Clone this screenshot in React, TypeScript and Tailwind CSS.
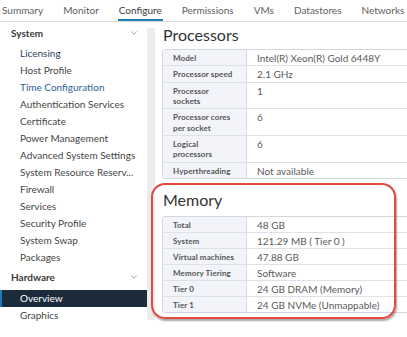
import { ChevronDown } from "lucide-react"

const tabs = ["Summary", "Monitor", "Configure", "Permissions", "VMs", "Datastores", "Networks"]

const systemItems = [
  "Licensing",
  "Host Profile",
  "Time Configuration",
  "Authentication Services",
  "Certificate",
  "Power Management",
  "Advanced System Settings",
  "System Resource Reserv...",
  "Firewall",
  "Services",
  "Security Profile",
  "System Swap",
  "Packages",
]

const processorRows: [string, string][] = [
  ["Model", "Intel(R) Xeon(R) Gold 6448Y"],
  ["Processor speed", "2.1 GHz"],
  ["Processor sockets", "1"],
  ["Processor cores per socket", "6"],
  ["Logical processors", "6"],
  ["Hyperthreading", "Not available"],
]

const memoryRows: [string, string][] = [
  ["Total", "48 GB"],
  ["System", "121.29 MB ( Tier 0 )"],
  ["Virtual machines", "47.88 GB"],
  ["Memory Tiering", "Software"],
  ["Tier 0", "24 GB DRAM (Memory)"],
  ["Tier 1", "24 GB NVMe (Unmappable)"],
]

const PropTable = ({ rows, loose }: { rows: [string, string][]; loose?: boolean }) => (
  <div className="w-[270px] overflow-hidden rounded-[3px] border border-[#d3d8e0]">
    {rows.map(([label, value], i) => (
      <div
        className={`flex ${loose ? "leading-[10.33px]" : "leading-[10px]"} ${
          i < rows.length - 1 ? "border-b border-[#dde1e8]" : ""
        }`}
        key={label}
      >
        <div className="w-[84px] shrink-0 border-r border-[#d3d8e0] bg-[#f2f4fa] pt-[3px] pr-[11px] pb-[2px] pl-[10px] text-[8px] font-bold tracking-[0.1px] text-[#555]">
          {label}
        </div>
        <div className="pt-[3px] pb-[2px] pl-[10px] text-[10px] text-[#5a5a5a]">{value}</div>
      </div>
    ))}
  </div>
)

export default function App() {
  return (
    <div className="h-[337px] w-[407px] overflow-hidden bg-white font-['Lato',sans-serif]">
      <nav className="flex h-[22px] gap-[20px] border-b border-[#dcdcdc] pl-[2px]">
        {tabs.map((tab) => (
          <div
            className={`flex h-[21px] items-center border-b-2 pt-[1px] text-[10px] ${
              tab === "Configure"
                ? "-mx-[1px] border-[#1a7db4] px-[1px] text-[#3c3c3c]"
                : "border-transparent text-[#5e5e5e]"
            }`}
            key={tab}
          >
            {tab}
          </div>
        ))}
      </nav>

      <div className="flex">
        <aside className="w-[147px] shrink-0">
          <div className="flex h-[22px] items-center justify-between pr-[8px] pl-[11px] text-[10px] font-bold text-[#3a3a3a]">
            System
            <ChevronDown className="size-[10px] text-[#777]" strokeWidth={1.6} />
          </div>
          <ul className="pt-[1px]">
            {systemItems.map((item) => (
              <li
                className={`flex h-[17px] items-center pl-[20px] text-[10px] ${
                  item === "Time Configuration"
                    ? "text-[#2d6599]"
                    : item === "Licensing"
                      ? "text-[#2b3f62]"
                      : "text-[#454545]"
                }`}
                key={item}
              >
                {item}
              </li>
            ))}
          </ul>
          <div className="flex h-[22px] items-center justify-between pr-[8px] pl-[11px] text-[10px] font-bold text-[#3a3a3a]">
            Hardware
            <ChevronDown className="size-[10px] text-[#777]" strokeWidth={1.6} />
          </div>
          <div className="mt-[2px] flex h-[17px] items-center border-l-2 border-[#1a7db4] bg-[#1c2b39] pl-[18px] text-[10px] text-white">
            Overview
          </div>
          <div className="flex h-[17px] items-center pl-[20px] text-[10px] text-[#454545]">
            Graphics
          </div>
        </aside>

        <div className="mt-[6px] h-[292px] w-[8px] shrink-0 bg-[#ececec]" />

        <main className="min-w-0 flex-1 pl-[7px]">
          <h2 className="mt-[3px] mb-[4px] pl-[1px] text-[16px] leading-[20px] text-[#333]">
            Processors
          </h2>
          <PropTable rows={processorRows} loose />

          <section className="relative pt-[11px]">
            <div className="pointer-events-none absolute top-[4px] -left-[11px] h-[136px] w-[245px] rounded-[14px] border-2 border-[#e4483e] shadow-[1px_2px_2px_rgba(0,0,0,0.35)]" />
            <h2 className="mb-[6px] pl-[1px] text-[16px] leading-[20px] text-[#333]">Memory</h2>
            <PropTable rows={memoryRows} />
          </section>
        </main>
      </div>
    </div>
  )
}
